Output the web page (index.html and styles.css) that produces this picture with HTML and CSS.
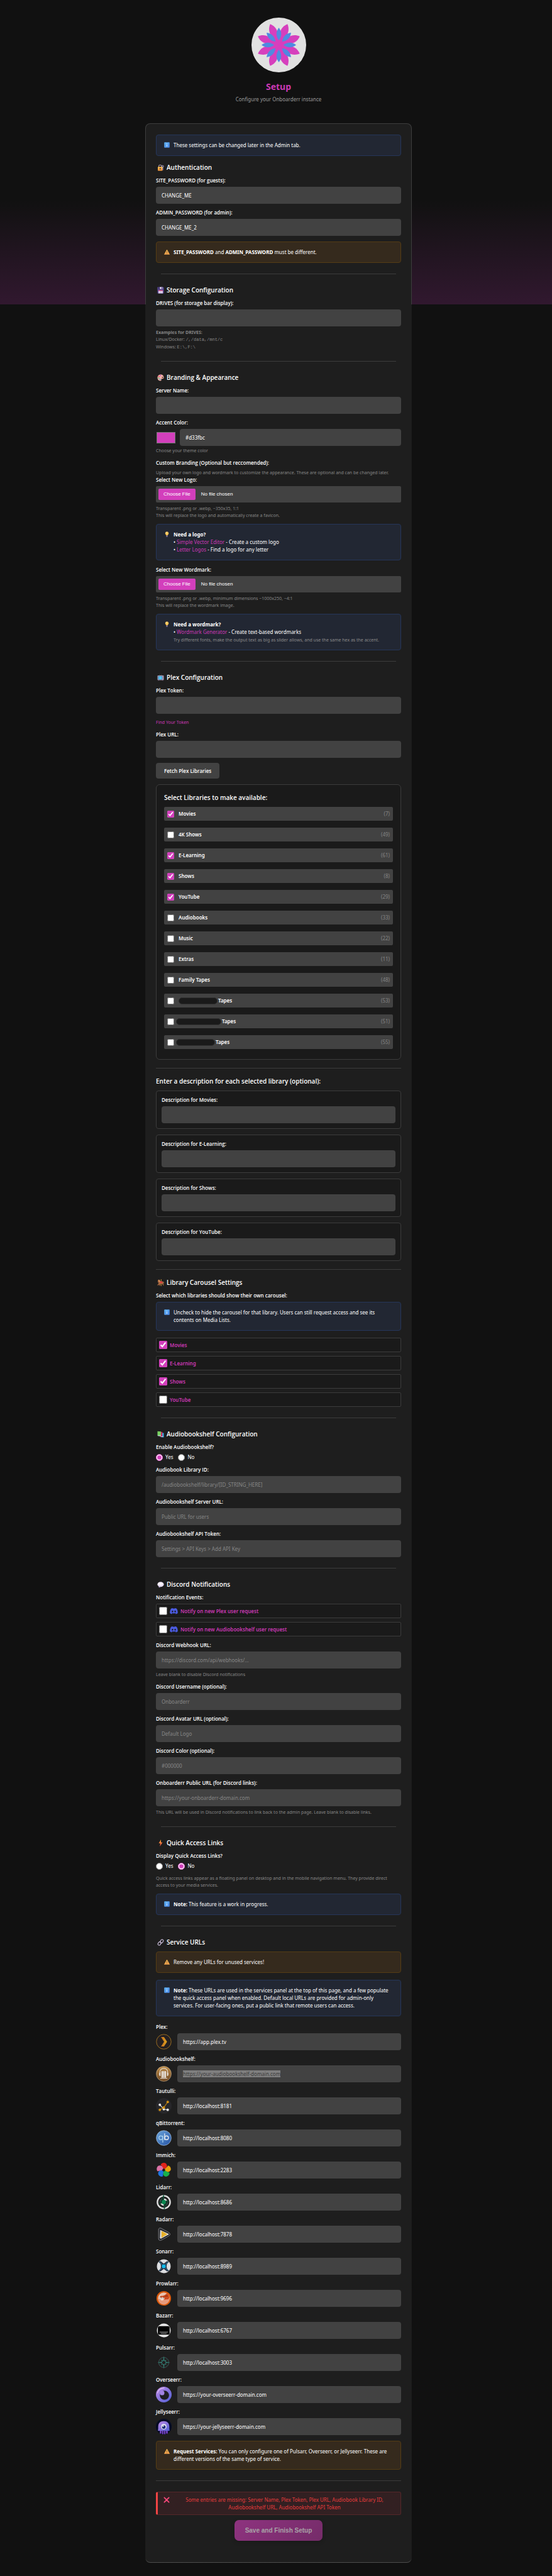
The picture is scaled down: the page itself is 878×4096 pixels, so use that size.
FILE: index.html
```html
<!DOCTYPE html>
<html lang="en">
<head>
<meta charset="utf-8">
<meta name="viewport" content="width=device-width, initial-scale=1">
<title>Onboarderr Setup</title>
<link rel="stylesheet" href="styles.css">
</head>
<body>
<svg class="defs" width="0" height="0" aria-hidden="true">
  <defs>
    <linearGradient id="g-info" x1="0" y1="0" x2="1" y2="1"><stop offset="0" stop-color="#62b8f8"/><stop offset="1" stop-color="#4a86e8"/></linearGradient>
    <linearGradient id="g-warn" x1="0" y1="0" x2="0" y2="1"><stop offset="0" stop-color="#ffd65c"/><stop offset="1" stop-color="#f99a4a"/></linearGradient>
    <linearGradient id="g-bolt" x1="0" y1="0" x2="0" y2="1"><stop offset="0" stop-color="#ffb53d"/><stop offset="1" stop-color="#f0413f"/></linearGradient>
    <linearGradient id="g-plex" x1="0" y1="0" x2="1" y2="0"><stop offset="0" stop-color="#c06b22"/><stop offset="1" stop-color="#e0a81c"/></linearGradient>
    <linearGradient id="g-abs" x1="0" y1="0" x2="0" y2="1"><stop offset="0" stop-color="#c08f4c"/><stop offset="1" stop-color="#6f4720"/></linearGradient>
    <linearGradient id="g-qb" x1="0" y1="0" x2="1" y2="1"><stop offset="0" stop-color="#6ca6dc"/><stop offset="1" stop-color="#2452a4"/></linearGradient>
    <linearGradient id="g-seer" x1="0" y1="0" x2="1" y2="1"><stop offset="0" stop-color="#c08ae4"/><stop offset="1" stop-color="#4f5fd6"/></linearGradient>
    <symbol id="i-info" viewBox="0 0 18 18"><rect x=".5" y=".5" width="17" height="17" rx="1.5" fill="url(#g-info)"/><circle cx="9" cy="5" r="1.2" fill="#e6f4ff"/><path d="M9 7.6v6.6" stroke="#e6f4ff" stroke-width="1.8"/></symbol>
    <symbol id="i-warn" viewBox="0 0 18 18"><path d="M9 2 17.4 17H.6z" fill="url(#g-warn)" stroke="#fbb04e" stroke-linejoin="round"/><path d="M9 7v5M9 13.6v1.6" stroke="#5a3b2e" stroke-width="1.6"/></symbol>
    <symbol id="i-bulb" viewBox="0 0 18 18"><path d="M9 .5a5.6 5.6 0 0 0-3 10.3L7 13h4l1-2.200A5.600 5.600 0 0 0 9 .5z" fill="#fbc556"/><circle cx="7.500" cy="4.500" r="2" fill="#ffe49a"/><path d="M7 13h4v4.500H7z" fill="#8d7aa8"/></symbol>
    <symbol id="i-cross" viewBox="0 0 18 18"><path d="M2.500 2.500l13 13M15.500 2.500l-13 13" stroke="#f9487a" stroke-width="3.200" stroke-linecap="round"/></symbol>
    <symbol id="i-lock" viewBox="0 0 22 22"><path d="M5 10V7a4.500 4.500 0 0 1 9 0v3" fill="none" stroke="#a798a8" stroke-width="2.200"/><rect x="2" y="9" width="15" height="12" rx="1.500" fill="#fb9c3f"/><rect x="2" y="9" width="15" height="5" rx="1.500" fill="#fbbd4a"/><circle cx="9.500" cy="14" r="1.900" fill="#4b3550"/><path d="M9.500 14v4" stroke="#4b3550" stroke-width="1.600"/><circle cx="17.500" cy="7" r="2.700" fill="none" stroke="#c5b9dd" stroke-width="2"/><path d="M18 10v9" stroke="#b3a5d0" stroke-width="2"/></symbol>
    <symbol id="i-disk" viewBox="0 0 22 22"><path d="M1 1h18l2 2v18H1z" fill="#5a4a96"/><path d="M5 1h12v7H5z" fill="#33285c"/><path d="M8 1h9v6H8z" fill="#e0d6ee"/><path d="M13.500 2h2v4h-2z" fill="#4a3b78"/><path d="M4 12h14v9H4z" fill="#d9cce8"/><path d="M4 11h14v2H4z" fill="#e03063"/></symbol>
    <symbol id="i-palette" viewBox="0 0 22 22"><path d="M11 1C5 1 1 5.500 1 11.500 1 17 5 21 10 21c3 0 3.500-1.500 3-3-.6-2 .4-3.500 3-3.500 3 0 5-1 5-4C21 5 17 1 11 1z" fill="#f5b3a4"/><circle cx="17" cy="10" r="1.800" fill="#35202c"/><circle cx="10" cy="4.500" r="1.900" fill="#c050e0"/><circle cx="5.500" cy="7.500" r="1.900" fill="#e8446a"/><circle cx="5" cy="12.500" r="1.900" fill="#46c07a"/><circle cx="9" cy="16.500" r="2" fill="#3c96e8"/></symbol>
    <symbol id="i-tv" viewBox="0 0 22 22"><path d="M7 1l4 4 4-4" fill="none" stroke="#8b8394"/><path d="M6 18l-2 3M16 18l2 3" stroke="#6b5474" stroke-width="1.500"/><rect x="1" y="4" width="20" height="15" rx="2" fill="#a99db5"/><rect x="3.500" y="6" width="13" height="11" rx="1" fill="#3a7fb4"/><rect x="5" y="7" width="10" height="9" fill="#58c8f4"/><circle cx="18.800" cy="8" r="1" fill="#e0457b"/></symbol>
    <symbol id="i-horse" viewBox="0 0 22 22"><path d="M12.500 0v22" stroke="#f0b43c" stroke-width="1.600"/><path d="M2 3l4-2 3 4 2 3 7-1 3 2 1 6-2-3-1 2 2 4-2 3-1-4-4-2-4 1-1 4-3 1 1-4-3 1-2 3-1-3 3-4 1-4-3 1z" fill="#a9683f"/><path d="M6 1l4 6-1 4-4-6z" fill="#e3a46a"/><path d="M9 7h7v5H9z" fill="#e23a40"/></symbol>
    <symbol id="i-books" viewBox="0 0 22 22"><path d="M11 6l10 1v14l-10-1z" fill="#37aee8"/><path d="M7 3.500h9.500v15H7z" fill="#d02c62"/><path d="M9 18h8l2-1v2l-3 1z" fill="#e9e2ef"/><path d="M1 1.500l11 1v13H1z" fill="#78d060"/><path d="M1 14h11v3H3z" fill="#a9d8c9"/></symbol>
    <symbol id="i-speech" viewBox="0 0 22 22"><ellipse cx="11" cy="10.500" rx="10.200" ry="8" fill="#e9dff2"/><path d="M4 16l2 5 5-3z" fill="#c4b2dc"/><ellipse cx="10" cy="8.500" rx="7" ry="4.500" fill="#faf5fd"/></symbol>
    <symbol id="i-bolt" viewBox="0 0 22 22"><path d="M12 0L5 12h5L8.500 22 17 9h-5z" fill="url(#g-bolt)"/></symbol>
    <symbol id="i-link" viewBox="0 0 22 22"><g fill="none" stroke="#c9bcd8" stroke-width="2.400"><rect x="-4" y="-6" width="8" height="12" rx="4" transform="translate(14.500 7.500) rotate(38)"/><rect x="-4" y="-6" width="8" height="12" rx="4" transform="translate(7.500 14.500) rotate(38)"/></g></symbol>
    <symbol id="i-discord" viewBox="0 0 24 19"><path d="M20.300 1.600A19.800 19.800 0 0 0 15.400 0l-.7 1.300a18 18 0 0 0-5.500 0L8.600 0a19.700 19.700 0 0 0-4.900 1.500C.6 6.200-.3 10.700.1 15.200a20 20 0 0 0 6 3l1.300-2-2-1 .5-.4c4 1.800 8.200 1.800 12.100 0l.5.4-2 1 1.300 2a20 20 0 0 0 6-3c.5-5.200-.8-9.700-3.500-13.600zM8 12.600c-1.200 0-2.200-1.100-2.200-2.400S6.800 7.700 8 7.700s2.200 1.100 2.200 2.500S9.200 12.600 8 12.600zm8 0c-1.200 0-2.200-1.100-2.200-2.400s1-2.500 2.200-2.500 2.200 1.100 2.200 2.500-1 2.400-2.200 2.400z" fill="#4b5be0"/></symbol>
  </defs>
</svg>

<header class="hero">
  <svg class="hero-logo" viewBox="-43.500 -43.500 87 87" role="img" aria-label="Onboarderr logo">
    <defs>
      <path id="petal-lg" d="M0 0C-4-8-6.500-15-6-24-5.500-29-3-33 0-36 3-33 5.500-29 6-24 6.500-15 4-8 0 0z"/>
      <path id="petal-sm" d="M0-7.500C-5-14-5-21 0-27.500 5-21 5-14 0-7.500z"/>
    </defs>
    <circle r="43.500" fill="#e1e1e1"/>
    <g fill="#d63fbd">
      <circle r="9"/>
      <use href="#petal-lg" transform="rotate(22.500)"/><use href="#petal-lg" transform="rotate(67.500)"/><use href="#petal-lg" transform="rotate(112.500)"/><use href="#petal-lg" transform="rotate(157.500)"/><use href="#petal-lg" transform="rotate(202.500)"/><use href="#petal-lg" transform="rotate(247.500)"/><use href="#petal-lg" transform="rotate(292.500)"/><use href="#petal-lg" transform="rotate(337.500)"/>
    </g>
    <g fill="#4f8ae0">
      <use href="#petal-sm"/><use href="#petal-sm" transform="rotate(45)"/><use href="#petal-sm" transform="rotate(90)"/><use href="#petal-sm" transform="rotate(135)"/><use href="#petal-sm" transform="rotate(180)"/><use href="#petal-sm" transform="rotate(225)"/><use href="#petal-sm" transform="rotate(270)"/><use href="#petal-sm" transform="rotate(315)"/>
    </g>
  </svg>
  <h1>Setup</h1>
  <p class="subtitle">Configure your Onboarderr instance</p>
</header>

<main>
<form class="card">
  <div class="note"><svg><use href="#i-info"/></svg><p>These settings can be changed later in the Admin tab.</p></div>

  <h2><svg><use href="#i-lock"/></svg>Authentication</h2>
  <div class="field"><label for="site-pw">SITE_PASSWORD (for guests):</label><input class="text" id="site-pw" type="text" value="CHANGE_ME"></div>
  <div class="field"><label for="admin-pw">ADMIN_PASSWORD (for admin):</label><input class="text" id="admin-pw" type="text" value="CHANGE_ME_2"></div>
  <div class="note warn"><svg><use href="#i-warn"/></svg><p><b>SITE_PASSWORD</b> and <b>ADMIN_PASSWORD</b> must be different.</p></div>
  <hr>

  <h2><svg><use href="#i-disk"/></svg>Storage Configuration</h2>
  <div class="field">
    <label for="drives">DRIVES (for storage bar display):</label><input class="text" id="drives" type="text">
    <p class="hint"><b>Examples for DRIVES:</b><br>Linux/Docker: <code>/,/data,/mnt/c</code></p>
    <p class="hint next">Windows: <code>E:\,F:\</code></p>
  </div>
  <hr>

  <h2><svg><use href="#i-palette"/></svg>Branding &amp; Appearance</h2>
  <div class="field"><label for="server">Server Name:</label><input class="text" id="server" type="text"></div>
  <div class="field">
    <label for="accent-hex">Accent Color:</label>
    <div class="color-row"><input class="swatch" type="color" value="#d33fbc" aria-label="Pick accent color"><input class="text" id="accent-hex" type="text" value="#d33fbc"></div>
    <p class="hint near">Choose your theme color</p>
  </div>
  <p class="label">Custom Branding (Optional but reccomended):</p>
  <p class="hint flush">Upload your own logo and wordmark to customize the appearance. These are optional and can be changed later.</p>
  <div class="field">
    <label for="logo">Select New Logo:</label><input class="file" id="logo" type="file">
    <p class="hint">Transparent .png or .webp, ~350x35, 1:1<br>This will replace the logo and automatically create a favicon.</p>
    <div class="note"><svg><use href="#i-bulb"/></svg><p><b>Need a logo?</b><br>• <a href="#editor">Simple Vector Editor</a> - Create a custom logo<br>• <a href="#letters">Letter Logos</a> - Find a logo for any letter</p></div>
  </div>
  <div class="field">
    <label for="wordmark">Select New Wordmark:</label><input class="file" id="wordmark" type="file">
    <p class="hint">Transparent .png or .webp, minimum dimensions ~1000x250, ~4:1<br>This will replace the wordmark image.</p>
    <div class="note"><svg><use href="#i-bulb"/></svg><p><b>Need a wordmark?</b><br>• <a href="#generator">Wordmark Generator</a> - Create text-based wordmarks<br><small>Try different fonts, make the output text as big as slider allows, and use the same hex as the accent.</small></p></div>
  </div>
  <hr>

  <h2><svg><use href="#i-tv"/></svg>Plex Configuration</h2>
  <div class="field">
    <label for="plex-token">Plex Token:</label><input class="text" id="plex-token" type="text">
    <p class="hint link"><a href="#token">Find Your Token</a></p>
  </div>
  <div class="field"><label for="plex-url">Plex URL:</label><input class="text" id="plex-url" type="text"></div>
  <button class="secondary" type="button">Fetch Plex Libraries</button>
  <section class="panel">
    <h3>Select Libraries to make available:</h3>
    <div class="libs">
      <label class="lib"><input type="checkbox" checked><span>Movies</span><em>(7)</em></label>
      <label class="lib"><input type="checkbox"><span>4K Shows</span><em>(49)</em></label>
      <label class="lib"><input type="checkbox" checked><span>E-Learning</span><em>(61)</em></label>
      <label class="lib"><input type="checkbox" checked><span>Shows</span><em>(8)</em></label>
      <label class="lib"><input type="checkbox" checked><span>YouTube</span><em>(29)</em></label>
      <label class="lib"><input type="checkbox"><span>Audiobooks</span><em>(33)</em></label>
      <label class="lib"><input type="checkbox"><span>Music</span><em>(22)</em></label>
      <label class="lib"><input type="checkbox"><span>Extras</span><em>(11)</em></label>
      <label class="lib"><input type="checkbox"><span>Family Tapes</span><em>(48)</em></label>
      <label class="lib"><input type="checkbox"><span><i class="masked"></i>Tapes</span><em>(53)</em></label>
      <label class="lib tight"><input type="checkbox"><span><i class="masked long"></i>Tapes</span><em>(51)</em></label>
      <label class="lib tight"><input type="checkbox"><span><i class="masked"></i>Tapes</span><em>(55)</em></label>
    </div>
  </section>
  <hr class="full">

  <h3 class="section-title">Enter a description for each selected library (optional):</h3>
  <div class="descs">
    <div class="desc"><label for="d-movies">Description for Movies:</label><input class="text" id="d-movies" type="text"></div>
    <div class="desc"><label for="d-elearning">Description for E-Learning:</label><input class="text" id="d-elearning" type="text"></div>
    <div class="desc"><label for="d-shows">Description for Shows:</label><input class="text" id="d-shows" type="text"></div>
    <div class="desc"><label for="d-youtube">Description for YouTube:</label><input class="text" id="d-youtube" type="text"></div>
  </div>
  <hr class="full">

  <h2 class="close"><svg><use href="#i-horse"/></svg>Library Carousel Settings</h2>
  <p class="label">Select which libraries should show their own carousel:</p>
  <div class="note attached"><svg><use href="#i-info"/></svg><p>Uncheck to hide the carousel for that library. Users can still request access and see its contents on Media Lists.</p></div>
  <div class="toggles">
    <label class="toggle"><input type="checkbox" checked>Movies</label>
    <label class="toggle"><input type="checkbox" checked>E-Learning</label>
    <label class="toggle"><input type="checkbox" checked>Shows</label>
    <label class="toggle"><input type="checkbox">YouTube</label>
  </div>
  <hr>

  <h2><svg><use href="#i-books"/></svg>Audiobookshelf Configuration</h2>
  <fieldset class="field">
    <legend>Enable Audiobookshelf?</legend>
    <div class="radios"><label><input type="radio" name="abs" checked>Yes</label><label><input type="radio" name="abs">No</label></div>
  </fieldset>
  <div class="field"><label for="abs-id">Audiobook Library ID:</label><input class="text" id="abs-id" type="text" placeholder="/audiobookshelf/library/[ID_STRING_HERE]"></div>
  <div class="field"><label for="abs-url">Audiobookshelf Server URL:</label><input class="text" id="abs-url" type="text" placeholder="Public URL for users"></div>
  <div class="field"><label for="abs-token">Audiobookshelf API Token:</label><input class="text" id="abs-token" type="text" placeholder="Settings &gt; API Keys &gt; Add API Key"></div>
  <hr>

  <h2><svg><use href="#i-speech"/></svg>Discord Notifications</h2>
  <div class="field">
    <p class="label">Notification Events:</p>
    <div class="toggles">
      <label class="toggle"><input type="checkbox"><svg><use href="#i-discord"/></svg>Notify on new Plex user request</label>
      <label class="toggle"><input type="checkbox"><svg><use href="#i-discord"/></svg>Notify on new Audiobookshelf user request</label>
    </div>
  </div>
  <div class="field"><label for="dc-hook">Discord Webhook URL:</label><input class="text" id="dc-hook" type="text" placeholder="https://discord.com/api/webhooks/..."><p class="hint">Leave blank to disable Discord notifications</p></div>
  <div class="field"><label for="dc-user">Discord Username (optional):</label><input class="text" id="dc-user" type="text" placeholder="Onboarderr"></div>
  <div class="field"><label for="dc-avatar">Discord Avatar URL (optional):</label><input class="text" id="dc-avatar" type="text" placeholder="Default Logo"></div>
  <div class="field"><label for="dc-color">Discord Color (optional):</label><input class="text" id="dc-color" type="text" placeholder="#000000"></div>
  <div class="field"><label for="dc-url">Onboarderr Public URL (for Discord links):</label><input class="text" id="dc-url" type="text" placeholder="https://your-onboarderr-domain.com"><p class="hint">This URL will be used in Discord notifications to link back to the admin page. Leave blank to disable links.</p></div>
  <hr>

  <h2><svg><use href="#i-bolt"/></svg>Quick Access Links</h2>
  <fieldset class="field">
    <legend>Display Quick Access Links?</legend>
    <div class="radios"><label><input type="radio" name="quick">Yes</label><label><input type="radio" name="quick" checked>No</label></div>
  </fieldset>
  <p class="hint flush">Quick access links appear as a floating panel on desktop and in the mobile navigation menu. They provide direct access to your media services.</p>
  <div class="note"><svg><use href="#i-info"/></svg><p><b>Note:</b> This feature is a work in progress.</p></div>
  <hr>

  <h2><svg><use href="#i-link"/></svg>Service URLs</h2>
  <div class="note warn"><svg><use href="#i-warn"/></svg><p>Remove any URLs for unused services!</p></div>
  <div class="note"><svg><use href="#i-info"/></svg><p><b>Note:</b> These URLs are used in the services panel at the top of this page, and a few populate the quick access panel when enabled. Default local URLs are provided for admin-only services. For user-facing ones, put a public link that remote users can access.</p></div>

  <div class="field"><label for="s-plex">Plex:</label><div class="service">
    <svg viewBox="0 0 48 48"><circle cx="24" cy="24" r="22.500" fill="#252021" stroke="#b98223" stroke-width="1.500"/><path d="M15.500 9.500h9L34 24l-9.500 14.500h-9L25 24z" fill="url(#g-plex)"/></svg>
    <input class="text" id="s-plex" type="text" value="https://app.plex.tv"></div></div>
  <div class="field"><label for="s-abs">Audiobookshelf:</label><div class="service">
    <svg viewBox="0 0 48 48"><circle cx="24" cy="24" r="23" fill="url(#g-abs)" stroke="#d9c7a8"/><path d="M12 24v-5a12 12 0 0 1 24 0v5" fill="none" stroke="#e8e4de" stroke-width="2"/><path d="M10 23c0-2 3-4 4-4v12c-2 0-4-2-4-4zM38 23c0-2-3-4-4-4v12c2 0 4-2 4-4zM17 16h4v20h-4zM22 16h4v20h-4zM27 16h4v20h-4zM13 37h22v2H13z" fill="#e8e4de"/></svg>
    <input class="text selected" id="s-abs" type="text" placeholder="https://your-audiobookshelf-domain.com"></div></div>
  <div class="field"><label for="s-tautulli">Tautulli:</label><div class="service">
    <svg viewBox="0 0 48 48"><circle cx="24" cy="24" r="24" fill="#27272a"/><path d="M12 20.500L24 34l12 2" fill="none" stroke="#e3e3e3" stroke-width="2"/><path d="M12 36l12-7L36 12" fill="none" stroke="#c4860f" stroke-width="2"/><g fill="#e6e6e6"><circle cx="12" cy="20.500" r="3.800"/><circle cx="24" cy="34" r="3.800"/><circle cx="36" cy="36" r="3.800"/></g><g fill="#d18f12"><circle cx="24" cy="29" r="4"/><circle cx="36" cy="12" r="3.800"/><circle cx="12" cy="36" r="3.800"/></g></svg>
    <input class="text" id="s-tautulli" type="text" value="http://localhost:8181"></div></div>
  <div class="field"><label for="s-qb">qBittorrent:</label><div class="service">
    <svg viewBox="0 0 48 48"><circle cx="24" cy="24" r="22.800" fill="url(#g-qb)" stroke="#b9cfe4" stroke-width="1.200"/><g fill="none" stroke-width="2.600"><circle cx="15" cy="23.500" r="5.800" stroke="#a3cdec"/><path d="M21 17v21" stroke="#a3cdec"/><circle cx="32.500" cy="23.500" r="5.800" stroke="#e3e9f0"/><path d="M26.600 10v20" stroke="#e3e9f0"/></g></svg>
    <input class="text" id="s-qb" type="text" value="http://localhost:8080"></div></div>
  <div class="field"><label for="s-immich">Immich:</label><div class="service">
    <svg viewBox="0 0 48 48"><defs><path id="blade" d="M22 20C19 14 17 9 14.500 7.500 17 3 22 1 27 2.300c5 1 8 6.700 6.500 12.700C32 17 30 19 28.500 21 26.500 20 24 19.500 22 20z"/></defs><use href="#blade" fill="#e2231a"/><use href="#blade" fill="#e9a30c" transform="rotate(72 24 24)"/><use href="#blade" fill="#17b04b" transform="rotate(144 24 24)"/><use href="#blade" fill="#1e74e0" transform="rotate(216 24 24)"/><use href="#blade" fill="#db72a6" transform="rotate(288 24 24)"/></svg>
    <input class="text" id="s-immich" type="text" value="http://localhost:2283"></div></div>
  <div class="field"><label for="s-lidarr">Lidarr:</label><div class="service">
    <svg viewBox="0 0 48 48"><circle cx="24" cy="24" r="19.500" fill="#222" stroke="#dedede" stroke-width="4.500"/><path d="M24 12.500A11.500 11.500 0 0 0 12.500 24M24 35.500A11.500 11.500 0 0 0 35.500 24" fill="none" stroke="#8f9391" stroke-width="1"/><path d="M24 13a11 11 0 0 1 10 6l-10 3zM24 35a11 11 0 0 1-10-6l10-3z" fill="#dedede"/><path d="M24 2v21l14-3-13 26V25l-14 3z" fill="#1b2a25" stroke="#0d6e49" stroke-width="1.300"/><circle cx="24" cy="24" r="6.500" fill="#0a8850"/></svg>
    <input class="text" id="s-lidarr" type="text" value="http://localhost:8686"></div></div>
  <div class="field"><label for="s-radarr">Radarr:</label><div class="service">
    <svg viewBox="0 0 48 48"><path d="M8 10c0-4 4-6 8-4l24 13c4 3 4 7 0 10L17 42c-4 2-9 1-9-4z" fill="#24262c" stroke="#a3a3a8" stroke-width="1.300"/><path d="M13 11l26 12-1 4-24 13-2-3z" fill="#d9d9d9"/><path d="M10 35l5 3 22-12 3 2-22 12c-4 2-8 1-8-5z" fill="#24262c"/><path d="M17 14v21l18-11z" fill="#e7b029"/></svg>
    <input class="text" id="s-radarr" type="text" value="http://localhost:7878"></div></div>
  <div class="field"><label for="s-sonarr">Sonarr:</label><div class="service">
    <svg viewBox="0 0 48 48"><circle cx="24" cy="24" r="21" fill="#dcdde0"/><path d="M9 9l6 6c5 4 13 4 18 0l6-6M9 39l6-6c5-4 13-4 18 0l6 6" fill="none" stroke="#2c3446" stroke-width="3"/><path d="M10 10c7 8 7 20 0 28l4 2 10-8 10 8 4-2c-7-8-7-20 0-28l-4-2-10 8-10-8z" fill="#2c3446"/><path d="M11 11l8 8M37 11l-8 8M11 37l8-8M37 37l-8-8" stroke="#1e92b8" stroke-width="1.500"/><circle cx="24" cy="24" r="6" fill="#0fb8ea"/></svg>
    <input class="text" id="s-sonarr" type="text" value="http://localhost:8989"></div></div>
  <div class="field"><label for="s-prowlarr">Prowlarr:</label><div class="service">
    <svg viewBox="0 0 48 48"><circle cx="24" cy="24" r="20" fill="#e9c3b0" stroke="#d9590c" stroke-width="4.500"/><path d="M7 26h34a17 17 0 0 1-34 0z" fill="#e79a7c"/><path d="M13 22c-2-4 3-7 6-5l9-3c3-5 8-6 9-2 4 4 5 12 1 15l-12 1-8-1z" fill="#cf4a1c"/><path d="M12 22c4-2 10-2 14 0 0 5-3 8-7 8s-7-3-7-8z" fill="#f0e3da"/><path d="M14 20l4 2M22 22l4-2M28 15l2 4M33 14l1 5M15 25h2M21 25h2" stroke="#4a2015" stroke-width="1.500"/></svg>
    <input class="text" id="s-prowlarr" type="text" value="http://localhost:9696"></div></div>
  <div class="field"><label for="s-bazarr">Bazarr:</label><div class="service">
    <svg viewBox="0 0 48 48"><circle cx="24" cy="24" r="21" fill="#e6e6e6"/><rect x="6" y="11" width="36" height="26" rx="5" fill="#000"/><path d="M11 29h26M15 33h18" stroke="#c9c9c9" stroke-width="1.500"/></svg>
    <input class="text" id="s-bazarr" type="text" value="http://localhost:6767"></div></div>
  <div class="field"><label for="s-pulsarr">Pulsarr:</label><div class="service">
    <svg viewBox="0 0 48 48"><circle cx="24" cy="24" r="21" fill="#221c1e"/><circle cx="24" cy="24" r="15.500" fill="none" stroke="#32665f" stroke-width="1.800"/><path d="M24 4l2.500 14 6-3-3 6.500L44 24l-14.500 2.500 3 6-6-3L24 44l-2.500-14.500-6 3 3-6L4 24l14.500-2.500-3-6.500 6 3z" fill="#32776d"/><circle cx="24" cy="24" r="5" fill="#221c1e"/></svg>
    <input class="text" id="s-pulsarr" type="text" value="http://localhost:3003"></div></div>
  <div class="field"><label for="s-overseerr">Overseerr:</label><div class="service">
    <svg viewBox="0 0 48 48"><circle cx="24" cy="24" r="24" fill="url(#g-seer)"/><circle cx="26" cy="26" r="14" fill="#1e1e22"/><circle cx="19" cy="19" r="7" fill="#a283e2"/><path d="M5 19C8 9 15 4 25 4" fill="none" stroke="#d8b8ee" stroke-width="2.500" stroke-linecap="round"/></svg>
    <input class="text" id="s-overseerr" type="text" value="https://your-overseerr-domain.com"></div></div>
  <div class="field"><label for="s-jellyseerr">Jellyseerr:</label><div class="service">
    <svg viewBox="0 0 48 48"><circle cx="24" cy="24" r="24" fill="#050b24"/><path d="M12 36h5v9h-5zM19 36h4v11h-4zM25 36h4v11h-4zM31 36h5v9h-5z" fill="#7c45cc"/><path d="M6 36c1-3 1-7 1-12C7 13 14 7 24 7s17 6 17 17c0 5 0 9 1 12-3 2-6 0-8 1-3 1-6-1-10 0-4-1-7 1-10 0-2-1-5 1-8-1z" fill="url(#g-seer)"/><circle cx="24" cy="24" r="8.500" fill="#e4e3f0"/><circle cx="24" cy="25" r="5.500" fill="#1b2d74"/><circle cx="22" cy="22" r="2.300" fill="#e4e3f0"/></svg>
    <input class="text" id="s-jellyseerr" type="text" value="https://your-jellyseerr-domain.com"></div></div>

  <div class="note warn"><svg><use href="#i-warn"/></svg><p><b>Request Services:</b> You can only configure one of Pulsarr, Overseerr, or Jellyseerr. These are different versions of the same type of service.</p></div>
  <hr class="full end">

  <div class="error" role="alert"><svg><use href="#i-cross"/></svg><p>Some entries are missing: Server Name, Plex Token, Plex URL, Audiobook Library ID, Audiobookshelf URL, Audiobookshelf API Token</p></div>
  <button class="save" type="submit" disabled>Save and Finish Setup</button>
</form>
</main>
</body>
</html>
```

FILE: styles.css
```css
:root {
  --accent: #d33fbc;
  --accent-text: #ca38b4;
  --panel: #1a1a1a;
  --line: #3c3c3c;
  --input: #424242;
  --muted: #868686;
}

* { box-sizing: border-box; }

body {
  margin: 0;
  padding: 28px 0 21px 8px;
  background: #111 linear-gradient(#111 66%, #31182f) 0 0 / 100% 484px no-repeat;
  color: #fff;
  font: 8px/12px "Noto Sans", "Open Sans", sans-serif;
  accent-color: var(--accent);
}

p, h1, h2, h3, fieldset { margin: 0; }
b { font-weight: 700; }
svg { display: block; flex: none; }
.defs { position: absolute; }
input, button { font: inherit; color: inherit; }
a { color: var(--accent-text); text-decoration: none; }

/* Header */
.hero { text-align: center; }
.hero-logo { width: 87px; height: 87px; margin: 0 auto 13px; }
h1 { font-size: 14px; line-height: 20px; font-weight: 700; color: var(--accent-text); }
.subtitle { margin-top: 4px; color: #9a9a9a; }

/* Card */
.card {
  max-width: 424px;
  margin: 32px auto 0;
  padding: 17px 16px 34px;
  border: 1px solid transparent;
  border-radius: 8px;
  background:
    linear-gradient(#1e1e1e, #1e1e1e) padding-box,
    linear-gradient(#3d3d3d 288px, #1c1c1c 288px calc(100% - 7px), #505050) border-box;
}

h2 {
  display: flex;
  align-items: center;
  gap: 4px;
  margin: 18px 0 8px;
  padding-left: 2px;
  font: 600 10px/14px "Open Sans", "Noto Sans", sans-serif;
}
h2 svg { width: 11px; height: 11px; }
h2.close { margin-top: 13px; }
h3 { font: 600 10px/14px "Open Sans", "Noto Sans", sans-serif; }
.note + h2 { margin-top: 11px; }
.section-title { margin: 13px 0 8px; }

hr { height: 1px; margin: 17px 8px 0; border: 0; background: var(--line); }
hr.full { margin: 13px 0 0; }
hr.end { margin-top: 17px; }

/* Fields */
.field { margin-bottom: 8px; padding: 0; border: 0; }
.field > label, .desc > label, .label, legend {
  display: block;
  width: fit-content;
  margin-bottom: 4px;
  padding: 0;
  font: 600 8px/12px "Open Sans", "Noto Sans", sans-serif;
}
.text {
  display: block;
  width: 100%;
  height: 27px;
  padding: 0 9px;
  border: 0;
  border-radius: 4px;
  background: var(--input);
}
.text::placeholder { color: #868686; opacity: 1; }
.text.selected::placeholder {
  color: #3c3c3c;
  background: linear-gradient(#7f7f7f, #7f7f7f) 0 0 / 155px 100% no-repeat;
}

.hint { margin-top: 4px; font-size: 7px; line-height: 11px; color: var(--muted); }
.hint.next { margin-top: 1px; }
.hint.near { margin-top: 2px; }
.hint.flush { margin-top: 0; }
.hint.link { margin-top: 8px; }
code { font-family: "Liberation Mono", monospace; font-size: 7px; line-height: 1px; }
small { font-size: 7px; line-height: 1px; color: #8a8a8a; }

.color-row { display: flex; align-items: center; gap: 7px; padding-left: 1px; }
.swatch {
  flex: none;
  width: 30px;
  height: 18px;
  padding: 0;
  border: 1px solid #777;
  background: none;
}
.swatch::-webkit-color-swatch-wrapper { padding: 0; }
.swatch::-webkit-color-swatch { border: 0; }
.color-row .text, .service .text { flex: 1; width: auto; min-width: 0; }

.file {
  display: block;
  width: 100%;
  height: 26px;
  padding: 4px;
  border-radius: 2px;
  background: var(--input);
  font-family: "Liberation Sans", Arial, sans-serif;
}
.file::file-selector-button {
  height: 18px;
  margin: 0 9px 0 0;
  padding: 0 8px;
  border: 0;
  border-radius: 2px;
  background: var(--accent);
  color: #fff;
  font: inherit;
}

.radios { display: flex; gap: 8px; height: 12px; }
.radios label { display: flex; align-items: center; gap: 4px; }
.radios input { width: 11px; height: 11px; margin: 0; }

/* Notes */
.note {
  display: flex;
  gap: 6px;
  margin: 8px 0 11px;
  padding: 10px 12px;
  border: 1px solid #25365a;
  border-radius: 4px;
  background: #222733;
}
.card > .note:first-child { margin-top: 0; }
.field + .note { margin-top: 9px; }
.field .note { margin-bottom: 9px; }
.note.attached { margin-top: 4px; }
.note svg { width: 9px; height: 9px; margin-top: 1px; }
.note.warn { border-color: #553c14; background: #352a1d; }

/* Library picker */
.secondary {
  display: block;
  height: 25px;
  padding: 0 13px;
  border: 0;
  border-radius: 4px;
  background: var(--input);
  font: 600 8px/12px "Open Sans", "Noto Sans", sans-serif;
}
.panel {
  margin-top: 9px;
  padding: 13px 12px 16px;
  border: 1px solid var(--line);
  border-radius: 6px;
  background: var(--panel);
}
.libs { display: grid; gap: 11px; margin-top: 8px; }
.lib {
  display: flex;
  align-items: center;
  gap: 7px;
  height: 22px;
  padding: 0 5px;
  border-radius: 2px;
  background: var(--input);
  font-weight: 600;
}
.lib.tight { gap: 3px; }
.lib input { width: 11px; height: 11px; margin: 0; }
.lib span { display: flex; flex: 1; align-items: center; gap: 1px; }
.lib em { font-style: normal; font-weight: 400; color: #858585; }
.masked { width: 62px; height: 11px; border: 1px solid #303030; border-radius: 6px; background: var(--panel); }
.masked.long { width: 72px; }

.descs { display: grid; gap: 9px; }
.desc {
  padding: 8px;
  border: 1px solid var(--line);
  border-radius: 4px;
  background: var(--panel);
}

/* Toggle rows */
.toggles { display: grid; gap: 6px; }
.toggle {
  display: flex;
  align-items: center;
  gap: 4px;
  height: 23px;
  padding: 0 4px;
  border: 1px solid var(--line);
  border-radius: 2px;
  background: var(--panel);
  color: var(--accent-text);
  font-weight: 600;
}
.toggle input { width: 13px; height: 13px; margin: 0; }
.toggle svg { width: 13px; height: 10px; }

.service { display: flex; align-items: center; gap: 9px; }
.service svg { width: 25px; height: 25px; }

/* Submit */
.error {
  display: flex;
  gap: 6px;
  margin-top: 17px;
  padding: 6px 8px 5px 9px;
  border: 1px solid #552729;
  border-left: 3px solid #f04444;
  border-radius: 3px;
  background: #322022;
  color: #e53b3b;
  text-align: center;
}
.error svg { width: 10px; height: 10px; margin-top: 1px; }
.error p { flex: 1; }
.save {
  display: block;
  height: 33px;
  margin: 8px auto 0;
  padding: 0 17px;
  border: 0;
  border-radius: 7px;
  background: linear-gradient(135deg, #8e337f, #752c69);
  box-shadow: 0 2px 6px #00000033;
  color: #a8a4a7;
  font: 700 10px/14px "Liberation Sans", Arial, sans-serif;
}
```
